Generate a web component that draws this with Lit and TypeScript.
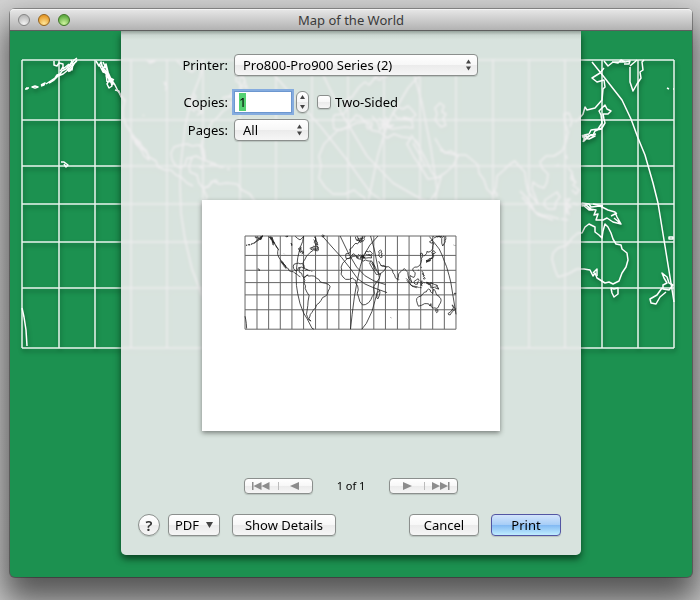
import { LitElement, html, css, svg } from "lit";
import { customElement, query } from "lit/decorators.js";

const MERIDIANS = [0, 37, 73, 109, 145, 181, 218, 254, 290, 326, 362, 398, 434, 471, 507, 543, 580, 616, 652];
const PARALLELS = [0, 60, 106, 144, 182, 228, 288];

const COASTS = [
  // Aleutians and Alaska
  "M3 29l2 0l1 -1M4 28l3 0M10 27l3 -1l3 1l-3 1zM19 26l3 -1l1 -2l-4 2M24 24l3 -2l3 -2l3 -2l2 -3l3 -1l2 -3l4 -2l3 -4l3 -2l2 -3l3 -2M27 23l5 -3l4 -4l5 -2l5 -4l5 -5l4 -5",
  "M32 1v4l3 1l2 -3l4 1v3l-2 3M38 11l4 -4M41 9l6 -5M47 12l-1 -4l4 2l1 -6l-4 3l3 -6M49 0l2 4l4 -3M45 9l3 2l4 -7",
  // North America
  "M74 1l3 5l2 -4l2 7l3 -5l2 8l-2 4l4 3l-3 5l2 4l3 -2l-2 -8l4 2M77 4l4 8l3 1l1 9M81 2l4 8l4 9l4 6l3 6l4 6l3 5M79 5l7 9l2 8l-3 -7l-5 -6M86 15l5 10",
  "M93 30l4 1l2 6l4 3l-2 8v9l3 8l6 9l5 7l4 5l5 4l3 7l7 4l2 6l7 3l6 0l5 5l5 2l6 6l6 3",
  "M110 76l4 8l5 5l3 7l5 4l-2 -7l-5 -5l-2 -6l-5 -4M117 82l9 13M113 80l6 10",
  "M150 100l-1 -7l3 -6l7 -2l6 -1l5 2l7 -1l5 5l1 9l-3 -5l-1 -8l2 -8l5 -7l4 -9l6 -5l5 -6l6 -4l5 -4l5 1l6 2l5 -3l-4 -4l2 -5l-6 -3l-2 -7l-4 -3l1 -6l-3 -4",
  "M150 100l4 6l5 2l4 -3l2 -7l5 0l-3 8l1 6l7 3l2 8l4 5l6 -2l3 -5",
  "M168 98l6 -2l8 4l8 3l3 2M187 106l4 -3l7 4l4 0M205 109l3 0M177 107l4 1M192 120l4 1",
  "M164 40l5 -3l5 4l-5 2l-1 5l4 3l2 -5l5 1l2 5l-6 3M171 33l3 4l-3 3M165 41l8 6l6 5M142 22l3 6l-2 2M143 22l2 7M125 0l3 3l5 -2l-5 0M155 1l8 7l7 4l7 -6l4 -5M121 55l1 1",
  "M200 38l8 -2l4 -5l7 3l6 -1l2 6l-7 4l-7 -3l-5 3l-6 -3M204 37l10 0l8 3M214 4l5 2l-1 9l5 5l-3 6l6 2M216 2l5 14l4 12",
  // South America
  "M181 128l5 -1l5 -6l6 3l8 -1l10 1l5 6l8 4l5 8l6 2l9 2l9 3l6 6l-2 8l-4 7l-2 9l-6 7l-9 4l-5 9l-6 8l-8 6l-3 9l-7 7l-4 7l-5 6l-2 8l-3 6l7 7l-7 -4l-4 -9l-3 -8l2 -13l2 -14l1 -14l3 -17l-7 -11l-5 -11l1 -8l-5 -9l3 -8z",
  "M181 0l-3 17l-8 20l-7 30l-4 36l-1 20l1 30l4 26l7 30l11 29l11 18l15 29l6 3",
  // Great-circle arcs
  "M236 0l4 -3l5 2l-3 4l-4 -1M239 0l30 34l30 33l26 33l23 32l22 16l25 11l44 16",
  "M294 0l12 25l14 29l25 42l26 27l28 16l35 11",
  "M326 288l5 -45l7 -55l8 -46l10 -47l10 -33l20 -34l25 -28",
  "M361 288l14 -18l17 -36l10 -35l8 -30l5 -40l-6 -40l-9 -46l-12 -43",
  // Africa and Arabia
  "M325 68l-9 2l-6 6l-8 8l-5 12l2 10l-2 12l6 9l8 7l12 0l9 -4l6 5l5 3l-1 8l6 8l2 12l-3 11l4 12l4 14l8 10l9 -1l10 -6l7 -9l4 -10l7 -9l-2 -13l0 -10l8 -11l9 -13l4 -14l-13 2l-6 -10l-8 -12l-7 -13l4 -6l-9 -1l-8 -3l-7 4l-7 -6l-9 -2l1 -7l-7 -1l-9 1z",
  "M389 75l7 10l7 13l7 15l5 5l8 -5l8 -7l5 -10l-7 -5l-6 2l-5 -6l-5 -9M391 83l7 12l5 11M394 80l8 17",
  "M416 167l-3 5l-5 5v8l-1 6l4 3l4 -10l2 -9z",
  // Europe
  "M312 55l-1 6l1 8l7 1l6 -3l5 -7l4 -5l5 2l4 5l6 5l-3 2l-2 -4M312 55l10 -1l3 -6l-1 -8l6 -3l7 -10l6 -5l4 3l6 -7l5 2l4 -6l2 3l4 -5M350 56l6 7l2 7l3 -4l1 -6l6 0l-3 6l5 3l6 -1l7 -1l8 1l-1 -7l-7 -2l-8 -1l-4 -5l4 -6l6 2l5 -3l4 4l4 5l-5 4l-8 -2",
  "M341 2l2 9l5 3l3 -8l4 5l-2 6l6 -2l-2 -9l5 3l3 -8M346 0l8 16M363 2l-3 10l-9 7M371 0l-4 8l4 3M358 63l8 4l6 -2M360 60l10 7M364 57l3 12M359 66l9 -6M361 69l10 -4M357 58l9 9M344 12l9 3",
  "M418 43l-5 5l2 6l-2 6l6 7l5 -2l-3 -6l3 -5l-4 -2l2 -6z",
  // Southern and eastern Asia
  "M418 90l7 3l9 2l10 0l5 4l7 6l1 8l5 7l3 9l6 6l3 -8l1 -11l7 -6l6 -6l5 -3l5 6l5 5l1 10l2 9l5 7l5 6l-3 -8l-3 -7l1 -7l5 4l6 2l3 -6l1 -8l-6 -6l-2 -6l6 -6l8 0l8 -5l4 -9l2 -10l-3 -9l-1 -9l5 -1l3 8l-2 6M472 131l3 3l-1 3",
  "M498 131l6 6l5 7l4 8l7 3l8 1l9 3M500 137l8 9l8 9l15 5M523 140l6 -4l6 -4l3 5l-4 5l-1 7l-7 0l-4 -4zM542 140l6 -1l-4 5l5 3l-4 1l2 7M544 142v12M546 108l4 4l-1 7l5 3l-3 3l6 5l-3 4l-4 -4M550 114l3 9M534 106l3 -1M544 95l1 4",
  // Indonesia, New Guinea, Australia
  "M539 159l7 1M551 143l5 2M560 143l7 1l2 3l9 -1l8 4l7 2l2 5l4 7l-8 -2l-6 -4l-4 2l-7 0l2 -6l-4 1l2 -5l-6 -1l-4 -4l-4 1zM589 156l6 -3M561 145l6 5l4 0M563 144l6 5M571 144l10 2M592 158l6 5",
  "M531 193l5 -5l9 -3l5 -7l6 -5l4 0l3 -6l4 -3l6 3l0 5l4 3l3 3l1 -7l2 -7l3 3l3 6l2 6l3 5l5 1l1 4l5 4l1 7l-2 7l-4 6l-3 8l-6 3l-4 -2l-4 1l-8 -5l-2 -5l-2 3l-3 -6l-6 -1l-7 0l-9 5l-10 3l-3 -7l-3 -11z",
  "M571 213l4 -4l0 7M589 228l3 1l4 -1l0 6l-4 3l-2 -4z",
  // New Zealand
  "M640 213l5 4l2 6l4 2l-4 5l-6 -1l0 -4l4 -2l-3 -5zM640 228l-5 7l-7 4l1 4l5 1l4 -7l6 -5",
  // Japan, Kamchatka, Okhotsk coast
  "M583 45l2 4l4 2l-3 3l-5 0l1 5l1 4l-3 5l-7 3l-2 4l-5 1l-4 5l0 -6l5 -1l2 -4l7 -1l4 -6l-1 -8l-2 -4zM560 77l5 -1M562 81l5 -5M564 80l-3 -4M568 75l6 -1M560 75l4 4l5 -4l4 1l-6 3l-5 -1M574 70l6 -1M561 82l2 -5",
  "M608 7l0 15l3 9l4 -7l4 -6l-1 -6l3 -2l-1 -8l2 -2M615 0l-7 6M582 1l4 5l5 -4l5 1l3 -3l4 2l5 -1l-1 3l-5 0M590 2l14 0M582 8l-4 5l-8 5l5 4l7 -2l1 7l-2 2l-1 11l-7 8l-8 2l-2 -3l-2 7l-4 5l-4 3",
  "M570 2l12 15l18 23l9 19l7 19l7 17l8 28l5 20l6 37l6 37l4 25",
  // Small islands
  "M39 102l3 0l4 3l-2 2l-2 -3M0 248l2 9l2 13l1 16M647 177l4 0l0 2l-4 0zM645 28l2 1M651 29l1 0M450 252l2 1",
];

@customElement("world-map")
export class WorldMap extends LitElement {
  static styles = css`
    :host { display: block; }
    .map { display: block; width: 100%; height: auto; overflow: visible; }
    .grid, .coast {
      fill: none;
      stroke: var(--map-ink, #fff);
      vector-effect: non-scaling-stroke;
      stroke-linejoin: round;
    }
    .grid { stroke-width: var(--grid-weight, 1.5px); stroke: var(--grid-ink, #fff); }
    .coast { stroke-width: var(--coast-weight, 1.5px); }
  `;
  render() {
    const grid =
      MERIDIANS.map((x) => `M${x} 0V288`).join("") + PARALLELS.map((y) => `M0 ${y}H652`).join("");
    return html`<svg class="map" viewBox="0 0 652 288" role="img" aria-label="World map">
      <path class="grid" d=${grid}></path>
      ${COASTS.map((d) => svg`<path class="coast" d=${d}></path>`)}
    </svg>`;
  }
}

@customElement("app-root")
export class AppRoot extends LitElement {
  @query("#copies") copies!: HTMLInputElement;

  static styles = css`
    * { box-sizing: border-box; }
    :host {
      display: flex;
      flex-direction: column;
      box-sizing: border-box;
      min-height: 100vh;
      padding: 9px 8px 23px 10px;
      overflow: hidden;
      background: linear-gradient(#d4d4d4, #cacaca);
      font: 13px/16px "Lucida Grande", "Noto Sans", sans-serif;
      color: #000;
    }
    button, input, select { font: inherit; color: inherit; margin: 0; }
    .window {
      flex: 1;
      display: flex;
      flex-direction: column;
      border-radius: 5px;
      background: #1c9150;
      box-shadow: 0 0 0 1px rgba(0, 0, 0, 0.3), 0 18px 32px 6px rgba(0, 0, 0, 0.58);
    }
    .titlebar {
      display: grid;
      grid-template-columns: 1fr auto 1fr;
      align-items: center;
      height: 22px;
      padding: 0 8px;
      border-radius: 4px 4px 0 0;
      border-bottom: 1px solid #5e5e5e;
      background: linear-gradient(#e8e8e8, #b2b2b2);
      box-shadow: inset 0 1px #f4f4f4;
    }
    .lights { display: flex; gap: 8px; }
    .light {
      width: 12px;
      height: 12px;
      padding: 0;
      border: 1px solid #858585;
      border-radius: 50%;
      background: radial-gradient(circle at 50% 90%, #f4f4f4, #b9b9b9 80%);
    }
    .light.amber { border-color: #94621c; background: radial-gradient(circle at 50% 85%, #ffe79a, #e79c2c 75%); }
    .light.green { border-color: #3f7427; background: radial-gradient(circle at 50% 85%, #d0f5a0, #62ae43 75%); }
    .title { margin: 0; font-size: 13px; line-height: 16px; font-weight: 400; color: #3a3a3a; }
    .desk { flex: 1; display: grid; grid-template-columns: minmax(0, 1fr); }
    .desk > * { grid-area: 1 / 1; }
    .backdrop {
      padding: 29px 18px 0 12px;
      filter: drop-shadow(1px 3px 2px rgba(0, 40, 15, 0.45));
      --grid-ink: #e9f5ee;
    }
    .sheet {
      justify-self: center;
      align-self: start;
      width: 460px;
      max-width: 100%;
      padding: 23px 20px 19px 17px;
      border-radius: 0 0 5px 5px;
      background: linear-gradient(rgba(80, 95, 87, 0.5), rgba(120, 135, 127, 0.15) 4px, transparent 9px), rgba(237, 236, 237, 0.9);
      backdrop-filter: blur(1px);
      box-shadow: 0 4px 7px rgba(0, 35, 15, 0.7);
      clip-path: inset(0 -14px -16px -14px);
    }
    .row { display: grid; grid-template-columns: 90px 1fr; column-gap: 6px; align-items: center; }
    .row.copies { margin: 14px 0 5px; }
    .label { text-align: right; }
    .line { display: flex; align-items: center; }
    .popup { position: relative; display: inline-block; height: 22px; }
    .popup.wide { width: 244px; }
    .popup.small { width: 75px; }
    .popup select {
      appearance: none;
      width: 100%;
      height: 22px;
      padding: 0 20px 0 8px;
    }
    .popup svg { position: absolute; right: 6px; top: 5px; pointer-events: none; }
    .face {
      border: 1px solid #8b8f8d;
      border-radius: 4px;
      background: linear-gradient(#fff, #f7f7f7 50%, #ebebeb 51%, #f6f6f6);
      box-shadow: 0 1px 1px rgba(0, 0, 0, 0.15);
    }
    .number {
      width: 58px;
      height: 22px;
      margin: 1px 1px 1px 0;
      padding: 0 4px;
      line-height: 16px;
      border: 1px solid #6c97cf;
      border-radius: 0;
      background: #fff;
      outline: none;
      box-shadow: 0 0 0 2px #85acdf;
    }
    .number::selection { background: rgba(82, 208, 112, 0.99); color: #000; }
    .stepper { display: flex; flex-direction: column; width: 13px; height: 22px; margin: 0 8px 0 3px; border-radius: 6px; overflow: hidden; }
    .stepper button { flex: 1; display: grid; place-items: center; padding: 0; border: 0; background: none; }
    .check { display: flex; align-items: center; gap: 4px; }
    .check input { appearance: none; width: 14px; height: 14px; border-radius: 3px; }
    .preview {
      width: 298px;
      max-width: 100%;
      min-height: 231px;
      margin: 59px 0 47px 64px;
      padding: 36px 44px 0 43px;
      background: #fff;
      box-shadow: 0 2px 5px rgba(0, 0, 0, 0.45);
      --map-ink: #222;
      --grid-ink: #666;
      --grid-weight: 1px;
      --coast-weight: 0.8px;
    }
    .pager { display: flex; justify-content: center; align-items: center; gap: 24px; padding-left: 3px; font-size: 11px; margin-bottom: 20px; }
    .pair { display: flex; width: 69px; height: 16px; border-radius: 4px; }
    .pair button { flex: 1; display: grid; place-items: center; padding: 0; border: 0; background: none; }
    .pair svg, .stepper svg { display: block; }
    .pair button + button { background: linear-gradient(#bbb, #bbb) 0 50% / 1px 8px no-repeat; }
    .actions { display: flex; align-items: center; }
    .push { height: 22px; padding: 0; text-align: center; }
    .help { width: 22px; border-radius: 50%; font-size: 15px; font-weight: 600; color: #333; }
    .pdf { width: 52px; margin: 0 12px 0 8px; display: flex; align-items: center; justify-content: center; gap: 7px; }
    .details { width: 104px; }
    .cancel { width: 70px; margin-left: auto; margin-right: 12px; }
    .print {
      width: 70px;
      border-color: #5356a3;
      background: linear-gradient(#d3e4fb, #a6cdf7 50%, #82b9f3 51%, #c0edff);
    }
  `;

  firstUpdated() {
    this.copies.focus();
    this.copies.select();
  }

  private arrows() {
    return html`<svg width="7" height="12" viewBox="0 0 7 12" aria-hidden="true"><path d="M3.5 0.5L6 4.5H1zM3.5 11.5L6 7.5H1z" fill="#444" /></svg>`;
  }

  render() {
    return html`
      <main class="window">
        <header class="titlebar">
          <div class="lights">
            <button class="light" aria-label="Close"></button>
            <button class="light amber" aria-label="Minimize"></button>
            <button class="light green" aria-label="Zoom"></button>
          </div>
          <h1 class="title">Map of the World</h1>
        </header>
        <div class="desk">
          <world-map class="backdrop"></world-map>
          <form class="sheet" @submit=${(e: Event) => e.preventDefault()}>
            <div class="row">
              <label class="label" for="printer">Printer:</label>
              <span class="popup wide">
                <select id="printer" class="face"><option>Pro800-Pro900 Series (2)</option></select>
                ${this.arrows()}
              </span>
            </div>
            <div class="row copies">
              <label class="label" for="copies">Copies:</label>
              <div class="line">
                <input id="copies" class="number" type="text" inputmode="numeric" value="1" />
                <span class="stepper face">
                  <button type="button" aria-label="More copies"><svg width="5" height="4"><path d="M2.500 0L5 4H0z" fill="#444" /></svg></button>
                  <button type="button" aria-label="Fewer copies"><svg width="5" height="4"><path d="M2.500 4L5 0H0z" fill="#444" /></svg></button>
                </span>
                <label class="check"><input class="face" type="checkbox" />Two-Sided</label>
              </div>
            </div>
            <div class="row">
              <label class="label" for="pages">Pages:</label>
              <span class="popup small">
                <select id="pages" class="face"><option>All</option></select>
                ${this.arrows()}
              </span>
            </div>
            <div class="preview"><world-map></world-map></div>
            <nav class="pager" aria-label="Preview pages">
              <span class="pair face">
                <button type="button" aria-label="First page"><svg width="18" height="8"><path d="M0 0H1.500V8H0zM9.500 0V8L1.500 4zM17.500 0V8L9.500 4z" fill="#8c8c8c" /></svg></button>
                <button type="button" aria-label="Previous page"><svg width="9" height="8"><path d="M9 0V8L0 4z" fill="#8c8c8c" /></svg></button>
              </span>
              <span>1 of 1</span>
              <span class="pair face">
                <button type="button" aria-label="Next page"><svg width="9" height="8"><path d="M0 0V8L9 4z" fill="#8c8c8c" /></svg></button>
                <button type="button" aria-label="Last page"><svg width="18" height="8"><path d="M0 0V8L8 4zM8 0V8L16 4zM16 0H17.500V8H16z" fill="#8c8c8c" /></svg></button>
              </span>
            </nav>
            <div class="actions">
              <button type="button" class="push face help" aria-label="Help">?</button>
              <button type="button" class="push face pdf">PDF<svg width="7" height="6"><path d="M0 0H7L3.500 6z" fill="#444" /></svg></button>
              <button type="button" class="push face details">Show Details</button>
              <button type="button" class="push face cancel">Cancel</button>
              <button type="submit" class="push face print">Print</button>
            </div>
          </form>
        </div>
      </main>
    `;
  }
}
